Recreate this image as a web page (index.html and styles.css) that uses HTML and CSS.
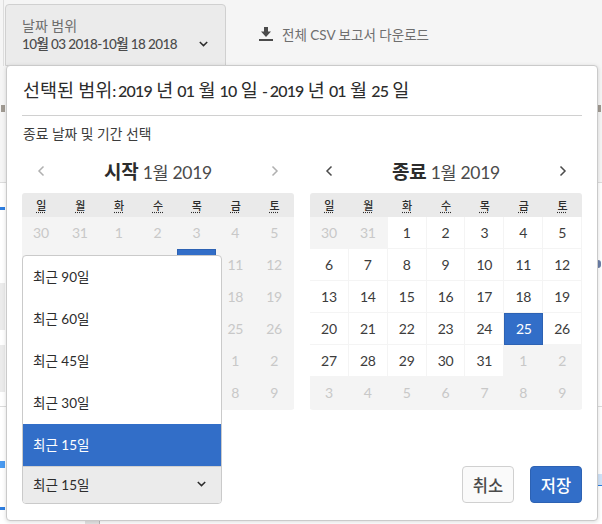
FILE: index.html
```html
<!DOCTYPE html>
<html lang="ko">
<head>
<title>날짜 범위</title>
<link rel="stylesheet" href="styles.css">
</head>
<body>
  <!-- page behind the popover, only slivers of it stay visible -->
  <div class="backdrop">
    <i class="sheet"></i>
    <i class="rule rule-1"></i>
    <i class="rule rule-2"></i>
    <i class="band band-1"></i>
    <i class="band band-2"></i>
    <i class="tick tick-1"></i>
    <i class="tick tick-2"></i>
    <i class="tick tick-3"></i>
    <i class="stub"></i>
    <i class="dot"></i>
    <i class="link"></i>
    <i class="sliver sliver-l"></i>
    <i class="sliver sliver-r"></i>
    <i class="edge"></i>
  </div>

  <div class="topbar">
    <button class="range-tab">
      <span class="range-text">
        <span class="range-label">날짜 범위</span>
        <span class="range-value">10월 03 2018-10월 18 2018</span>
      </span>
      <svg class="chevron" width="9" height="6" viewBox="0 0 9 6"><path d="M.8 1l3.700 3.600L8.200 1" fill="none" stroke="#2c2c2c" stroke-width="1.500"/></svg>
    </button>
    <a class="download">
      <svg width="14" height="14" viewBox="0 0 14 14"><path d="M5 0h4v4.500h3L7 10 2 4.500h3z" fill="#4b4b4b"/><rect y="12" width="14" height="2" fill="#4b4b4b"/></svg>
      전체 CSV 보고서 다운로드
    </a>
  </div>

  <div class="popover">
    <h2 class="selected">선택된 범위<span class="num">: 2019</span> 년 <span class="num">01</span> 월 <span class="num">10</span> 일 <span class="num">- 2019</span> 년 <span class="num">01</span> 월 <span class="num">25</span> 일</h2>
    <p class="hint">종료 날짜 및 기간 선택</p>

    <div class="calendars">
      <div class="calendar">
        <div class="cal-head muted-nav">
          <svg width="8" height="12" viewBox="0 0 8 12"><path d="M6.500 1.500L2 6l4.500 4.500" fill="none" stroke="currentColor" stroke-width="1.500"/></svg>
          <div class="cal-title"><b>시작</b> 1월 2019</div>
          <svg width="8" height="12" viewBox="0 0 8 12"><path d="M1.500 1.500L6 6l-4.500 4.500" fill="none" stroke="currentColor" stroke-width="1.500"/></svg>
        </div>
        <div class="weekdays">
          <abbr>일</abbr><abbr>월</abbr><abbr>화</abbr><abbr>수</abbr><abbr>목</abbr><abbr>금</abbr><abbr>토</abbr>
        </div>
        <!-- cells under the preset list stay empty, the list covers them -->
        <div class="days">
          <span class="off">30</span><span class="off">31</span><span class="off">1</span><span class="off">2</span><span class="off">3</span><span class="off">4</span><span class="off">5</span>
          <span class="off"></span><span class="off"></span><span class="off"></span><span class="off"></span><span class="picked"></span><span class="off">11</span><span class="off">12</span>
          <span class="off"></span><span class="off"></span><span class="off"></span><span class="off"></span><span class="off"></span><span class="off">18</span><span class="off">19</span>
          <span class="off"></span><span class="off"></span><span class="off"></span><span class="off"></span><span class="off"></span><span class="off">25</span><span class="off">26</span>
          <span class="off"></span><span class="off"></span><span class="off"></span><span class="off"></span><span class="off"></span><span class="off">1</span><span class="off">2</span>
          <span class="off"></span><span class="off"></span><span class="off"></span><span class="off"></span><span class="off"></span><span class="off">8</span><span class="off">9</span>
        </div>
      </div>

      <div class="calendar">
        <div class="cal-head">
          <svg width="8" height="12" viewBox="0 0 8 12"><path d="M6.500 1.500L2 6l4.500 4.500" fill="none" stroke="currentColor" stroke-width="1.500"/></svg>
          <div class="cal-title"><b>종료</b> 1월 2019</div>
          <svg width="8" height="12" viewBox="0 0 8 12"><path d="M1.500 1.500L6 6l-4.500 4.500" fill="none" stroke="currentColor" stroke-width="1.500"/></svg>
        </div>
        <div class="weekdays">
          <abbr>일</abbr><abbr>월</abbr><abbr>화</abbr><abbr>수</abbr><abbr>목</abbr><abbr>금</abbr><abbr>토</abbr>
        </div>
        <div class="days">
          <span class="off">30</span><span class="off">31</span><span>1</span><span>2</span><span>3</span><span>4</span><span>5</span>
          <span>6</span><span>7</span><span>8</span><span>9</span><span>10</span><span>11</span><span>12</span>
          <span>13</span><span>14</span><span>15</span><span>16</span><span>17</span><span>18</span><span>19</span>
          <span>20</span><span>21</span><span>22</span><span>23</span><span>24</span><span class="picked">25</span><span>26</span>
          <span>27</span><span>28</span><span>29</span><span>30</span><span>31</span><span class="off">1</span><span class="off">2</span>
          <span class="off">3</span><span class="off">4</span><span class="off">5</span><span class="off">6</span><span class="off">7</span><span class="off">8</span><span class="off">9</span>
        </div>
      </div>
    </div>

    <div class="actions">
      <button class="btn btn-cancel">취소</button>
      <button class="btn btn-save">저장</button>
    </div>

    <div class="preset">
      <ul class="preset-list">
        <li>최근 90일</li>
        <li>최근 60일</li>
        <li>최근 45일</li>
        <li>최근 30일</li>
        <li class="active">최근 15일</li>
      </ul>
      <div class="preset-current">
        최근 15일
        <svg width="9" height="6" viewBox="0 0 9 6"><path d="M.8 1l3.700 3.600L8.200 1" fill="none" stroke="#2c2c2c" stroke-width="1.500"/></svg>
      </div>
    </div>
  </div>
</body>
</html>
```

FILE: styles.css
```css
* {
  box-sizing: border-box;
}

html, body {
  margin: 0;
  height: 100%;
}

body {
  position: relative;
  width: 602px;
  height: 524px;
  overflow: hidden;
  background-color: #f5f5f5;
  color: #2c2c2c;
  font-family: "Lato", "Noto Sans CJK KR", sans-serif;
}

.backdrop i {
  position: absolute;
  display: block;
}

.sheet { left: 0; top: 182px; width: 602px; height: 342px; background-color: #fff; }
.rule { left: 0; width: 602px; height: 1px; background-color: #dcdcdc; }
.rule-1 { top: 182px; }
.rule-2 { top: 406px; }
.band { left: 0; width: 5px; background-color: #ebebeb; }
.band-1 { top: 283px; height: 47px; }
.band-2 { top: 345px; height: 47px; }
.tick { left: 0; width: 5px; background-color: #2d7de0; }
.tick-1 { top: 207px; height: 3px; }
.tick-2 { top: 461px; height: 7px; background-color: #4a9af0; }
.tick-3 { top: 507px; height: 3px; }
.stub { left: 85px; top: 521px; width: 15px; height: 3px; background-color: #e4e4e4; border-right: 1px solid #b8b8b8; }
.dot { left: 598px; top: 260px; width: 3px; height: 8px; border-radius: 0 4px 4px 0; background-color: #6b7fa8; }
.link { left: 598px; top: 474px; width: 4px; height: 12px; border-bottom: 1px solid #2d7de0; background-color: #cfe2f8; }
.sliver { top: 105px; height: 7px; background-color: #a09a92; }
.sliver-l { left: 1px; width: 4px; }
.sliver-r { left: 598px; width: 3px; }
.edge { left: 3px; top: 0; width: 1px; height: 66px; background-color: #dedede; }

.topbar {
  position: relative;
  display: flex;
  align-items: center;
  height: 66px;
  padding: 4px 0 0 5px;
}

.range-tab {
  display: flex;
  align-items: flex-end;
  justify-content: space-between;
  width: 221px;
  height: 62px;
  padding: 0 17px 12px 16px;
  background-color: #ebebeb;
  border: 1px solid #d0d0d0;
  border-radius: 4px 4px 0 0;
  color: #4b4b4b;
  font: inherit;
  text-align: left;
}

.range-text {
  display: flex;
  flex-direction: column;
}

.range-label {
  font-size: 14px;
  line-height: 18px;
  color: #6e6e6e;
}

.range-value {
  font-size: 13.500px;
  line-height: 18px;
  font-weight: 500;
  letter-spacing: -0.6px;
}

.chevron {
  margin-bottom: 6px;
}

.download {
  display: flex;
  align-items: center;
  gap: 9px;
  margin: 0 0 0 33px;
  padding-bottom: 2px;
  font-size: 13.500px;
  color: #6e6e6e;
}

.popover {
  position: absolute;
  left: 6px;
  top: 65px;
  width: 592px;
  height: 456px;
  padding: 0 15px;
  background-color: #fff;
  border: 1px solid #cacaca;
  border-radius: 4px;
  box-shadow: 0 1px 4px rgba(0, 0, 0, 0.15);
}

.selected {
  margin: 0;
  height: 50px;
  padding: 11px 0 0 1px;
  border-bottom: 1px solid #d0d0d0;
  font-size: 18.500px;
  line-height: 26px;
  font-weight: 400;
  word-spacing: -0.6px;
  color: #2c2c2c;
}

.num {
  font-size: 16px;
  font-weight: 500;
  letter-spacing: -0.8px;
}

.hint {
  margin: 0;
  padding: 9px 0 0 1px;
  height: 34px;
  font-size: 13.800px;
  line-height: 18px;
  color: #3c3c3c;
}

.calendars {
  display: flex;
  gap: 16px;
}

.calendar {
  width: 272px;
}

.cal-head {
  display: flex;
  align-items: center;
  justify-content: space-between;
  height: 43px;
  padding: 0 15px 2px;
  color: #4b4b4b;
}

.muted-nav svg {
  color: #b0b0b0;
}

.cal-title {
  font-size: 17.500px;
  letter-spacing: -0.3px;
  color: #4b4b4b;
}

.cal-title b {
  color: #2c2c2c;
  font-size: 19px;
  font-weight: 700;
}

.weekdays {
  display: grid;
  grid-template-columns: repeat(7, 1fr);
  height: 24px;
  align-items: center;
  background-color: #eaeaea;
  border-radius: 3px 3px 0 0;
  text-align: center;
}

abbr {
  font-size: 11px;
  font-weight: 500;
  text-decoration: underline dotted;
  text-underline-offset: 2px;
}

.days {
  display: grid;
  grid-template-columns: repeat(7, 1fr);
  grid-auto-rows: 32px;
  background-color: #f4f4f4;
  border-radius: 0 0 3px 3px;
  padding-bottom: 1px;
}

.days span {
  display: flex;
  align-items: center;
  justify-content: center;
  padding-bottom: 1px;
  background-color: #fff;
  border-right: 1px solid #f4f4f4;
  border-bottom: 1px solid #f4f4f4;
  font-size: 14px;
  letter-spacing: -0.3px;
  color: #3c3c3c;
}

.days span.off {
  background-color: #f4f4f4;
  color: #c8c8c8;
}

.days span.picked {
  background-color: #326ec8;
  border: 1px solid #2d62b3;
  color: #fff;
}

.actions {
  display: flex;
  justify-content: flex-end;
  gap: 16px;
  margin-top: 56px;
}

.btn {
  width: 52px;
  height: 37px;
  padding: 0;
  border-radius: 4px;
  font: inherit;
  font-size: 16.500px;
  font-weight: 500;
}

.btn-cancel {
  background-color: #fafafa;
  border: 1px solid #d0d0d0;
  color: #4b4b4b;
}

.btn-save {
  background-color: #326ec8;
  border: 1px solid #2d62b3;
  color: #fff;
}

.preset {
  position: absolute;
  left: 15px;
  top: 189px;
  width: 200px;
  height: 249px;
  display: flex;
  flex-direction: column;
  background-color: #fff;
  border: 1px solid #cacaca;
  border-radius: 4px;
  font-size: 13.500px;
  color: #2c2c2c;
}

.preset-list {
  list-style: none;
  margin: 0;
  padding: 0;
}

.preset-list li {
  display: flex;
  align-items: center;
  height: 42px;
  padding: 0 0 2px 10px;
}

.preset-list li.active {
  background-color: #326ec8;
  color: #fff;
}

.preset-current {
  flex: 1;
  display: flex;
  align-items: center;
  justify-content: space-between;
  padding: 0 15px 2px 10px;
  background-color: #ebebeb;
  border-top: 1px solid #d0d0d0;
  border-radius: 0 0 3px 3px;
}
```
